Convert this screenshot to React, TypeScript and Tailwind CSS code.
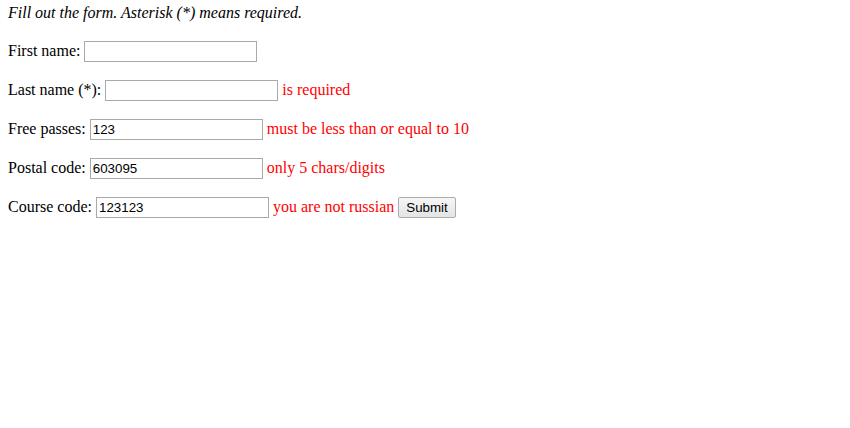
const inputCls =
  "h-[21px] w-[173px] border border-[#a9a9a9] bg-white px-[2px] py-[1px] align-baseline text-[13.33px] text-black outline-none [font-family:'Liberation_Sans',Arial,sans-serif]"

const Field = ({ label, value, error }: { label: string; value?: string; error?: string }) => (
  <p className="my-4 h-[23px] leading-[23px]">
    {label}{" "}
    <input type="text" defaultValue={value} className={inputCls} />
    {error && <span className="text-[#ff0000]"> {error}</span>}
  </p>
)

export default function App() {
  return (
    <div className="min-h-screen bg-white px-2 pt-[4px] text-[16px] text-black [font-family:'Liberation_Serif','Times_New_Roman',serif]">
      <form onSubmit={(e) => e.preventDefault()}>
        <p className="m-0 mb-[17px] italic leading-[18px]">Fill out the form. Asterisk (*) means required.</p>
        <Field label="First name:" />
        <Field label="Last name (*):" error="is required" />
        <Field label="Free passes:" value="123" error="must be less than or equal to 10" />
        <Field label="Postal code:" value="603095" error="only 5 chars/digits" />
        <p className="my-4 h-[23px] leading-[23px]">
          Course code:{" "}
          <input type="text" defaultValue="123123" className={inputCls} />
          <span className="text-[#ff0000]"> you are not russian</span>{" "}
          <button
            type="submit"
            className="h-[21px] rounded-[2px] border border-[#adadad] bg-gradient-to-b from-[#f6f6f6] to-[#e4e4e4] px-[7px] align-baseline text-[13.33px] leading-[17px] text-black [font-family:'Liberation_Sans',Arial,sans-serif]"
          >
            Submit
          </button>
        </p>
      </form>
    </div>
  )
}
